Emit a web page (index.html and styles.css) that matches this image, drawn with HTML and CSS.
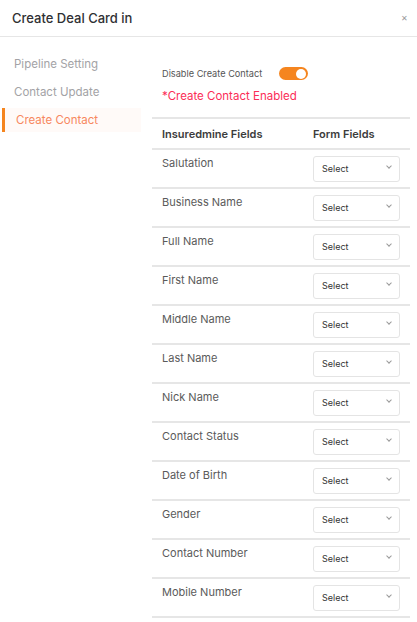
FILE: index.html
```html
<!DOCTYPE html>
<html lang="en">
<head>
    <meta charset="UTF-8">
    <meta name="viewport" content="width=device-width, initial-scale=1.0">
    <title>Create Deal Card</title>
    <link rel="stylesheet" href="styles.css">
</head>
<body>
<div class="modal">
    <div class="modal-head">
        <h1>Create Deal Card in</h1>
        <span class="close">&#x2715;</span>
    </div>
    <div class="modal-body">
        <ul class="side">
            <li>Pipeline Setting</li>
            <li>Contact Update</li>
            <li class="active">Create Contact</li>
        </ul>
        <div class="content">
            <div class="toggle-row">
                <span>Disable Create Contact</span>
                <span class="switch"><span class="knob"></span></span>
            </div>
            <p class="enabled">*Create Contact Enabled</p>
            <div class="fields">
                <div class="row head"><span>Insuredmine Fields</span><span>Form Fields</span></div>
                <div class="row"><span>Salutation</span><div class="select">Select<span class="chev"></span></div></div>
                <div class="row"><span>Business Name</span><div class="select">Select<span class="chev"></span></div></div>
                <div class="row"><span>Full Name</span><div class="select">Select<span class="chev"></span></div></div>
                <div class="row"><span>First Name</span><div class="select">Select<span class="chev"></span></div></div>
                <div class="row"><span>Middle Name</span><div class="select">Select<span class="chev"></span></div></div>
                <div class="row"><span>Last Name</span><div class="select">Select<span class="chev"></span></div></div>
                <div class="row"><span>Nick Name</span><div class="select">Select<span class="chev"></span></div></div>
                <div class="row"><span>Contact Status</span><div class="select">Select<span class="chev"></span></div></div>
                <div class="row"><span>Date of Birth</span><div class="select">Select<span class="chev"></span></div></div>
                <div class="row"><span>Gender</span><div class="select">Select<span class="chev"></span></div></div>
                <div class="row"><span>Contact Number</span><div class="select">Select<span class="chev"></span></div></div>
                <div class="row"><span>Mobile Number</span><div class="select">Select<span class="chev"></span></div></div>
            </div>
        </div>
    </div>
</div>
</body>
</html>
```

FILE: styles.css
```css
body{
    margin: 0;
    background: #fff;
    font-family: "Inter", "Noto Sans", sans-serif;
    color: #333;
}
.modal{
    width: 417px;
}
.modal-head{
    height: 36px;
    display: flex;
    align-items: center;
    justify-content: space-between;
    padding: 0 9px 0 12px;
    border-bottom: 1px solid #e6e6e6;
}
.modal-head h1{
    margin: 0;
    font-size: 13px;
    font-weight: 500;
    color: #2f3033;
}
.close{
    font-size: 8px;
    color: #9a9a9a;
}
.modal-body{
    display: flex;
}
.side{
    list-style: none;
    margin: 15px 0 0 2px;
    padding: 0;
    width: 139px;
}
.side li{
    height: 24px;
    line-height: 24px;
    margin-bottom: 4px;
    padding-left: 12px;
    font-size: 11.5px;
    color: #a3a3a6;
}
.side li.active{
    border-left: 3px solid #f5851f;
    padding-left: 11px;
    background: #fffaf8;
    color: #f7885f;
}
.content{
    width: 258px;
    margin-left: 11px;
}
.toggle-row{
    display: flex;
    align-items: center;
    gap: 17px;
    margin-top: 30px;
    padding-left: 10px;
    height: 13px;
    font-size: 9.2px;
    color: #555;
}
.switch{
    width: 29px;
    height: 13px;
    border-radius: 7px;
    background: #f5851f;
    display: flex;
    justify-content: flex-end;
    align-items: center;
    padding-right: 2px;
    box-sizing: border-box;
}
.knob{
    width: 10px;
    height: 10px;
    border-radius: 50%;
    background: #fff;
}
.enabled{
    margin: 9px 0 0;
    padding-left: 10px;
    font-size: 11.5px;
    color: #fb2d57;
    height: 14px;
    line-height: 14px;
}
.fields{
    margin-top: 14px;
    border-top: 2px solid #e6e6e6;
}
.row{
    display: grid;
    grid-template-columns: 151px 87px;
    height: 39px;
    box-sizing: border-box;
    padding: 6px 10px 0;
    border-bottom: 2px solid #e6e6e6;
    font-size: 11px;
    line-height: 14px;
    color: #5a5a5a;
}
.row.head{
    height: 31px;
    padding-top: 0;
    align-items: center;
    font-weight: 600;
    color: #3c3c3c;
}
.select{
    position: relative;
    height: 26px;
    box-sizing: border-box;
    border: 1px solid #e4e4e4;
    border-radius: 3px;
    padding-left: 8px;
    line-height: 24px;
    font-size: 9px;
    color: #333;
}
.chev{
    position: absolute;
    right: 8px;
    top: 7px;
    width: 3px;
    height: 3px;
    border-right: 1px solid #999;
    border-bottom: 1px solid #999;
    transform: rotate(45deg);
}
```
